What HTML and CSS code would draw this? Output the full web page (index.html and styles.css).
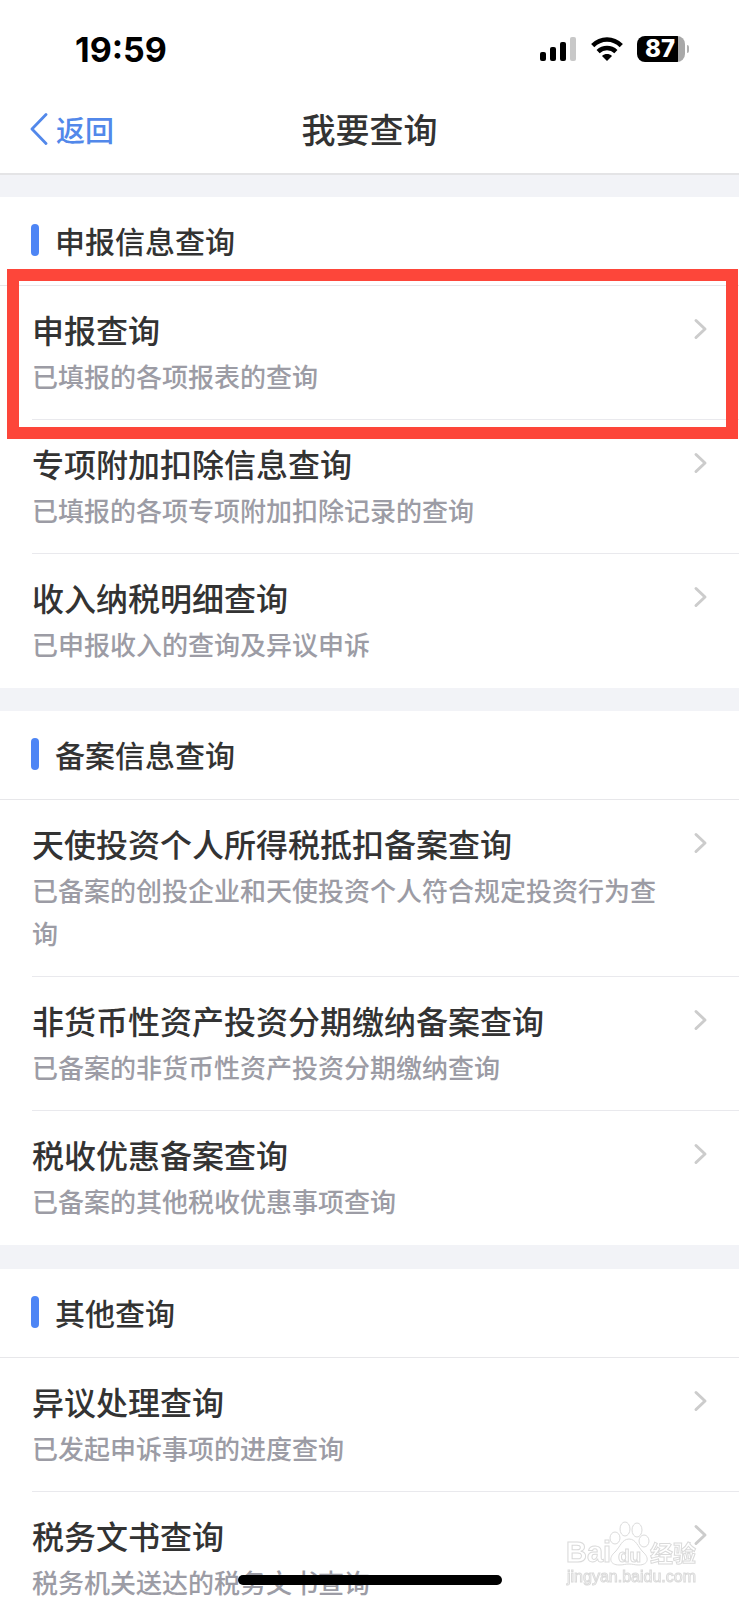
FILE: index.html
```html
<!DOCTYPE html>
<html lang="zh-CN">
<head>
<meta charset="utf-8">
<meta name="viewport" content="width=device-width, initial-scale=1">
<title>我要查询</title>
<link rel="stylesheet" href="styles.css">
</head>
<body>
<svg class="defs" aria-hidden="true">
  <symbol id="chevron" viewBox="0 0 16 24"><path d="M3 3.500L12 12L3 20.500" fill="none" stroke="currentColor" stroke-width="3" stroke-linecap="round" stroke-linejoin="round"/></symbol>
</svg>
<div class="app">
  <div class="status">
    <time class="clock">19:59</time>
    <div class="indicators">
      <svg class="signal" viewBox="0 0 38 24" aria-label="信号">
        <rect x="1" y="15" width="6" height="9" rx="2"/><rect x="11" y="10" width="6" height="14" rx="2"/><rect x="21" y="5" width="6" height="19" rx="2"/><rect x="31" y="0" width="6" height="24" rx="2" fill="#c8c8c8"/>
      </svg>
      <svg class="wifi" viewBox="0 0 32 24" aria-label="Wi-Fi">
        <g fill="none" stroke="#000" stroke-width="4.500"><path d="M1.700 8.600C10 .4 22 .4 30.300 8.600"/><path d="M7.100 14.600C12.200 9.800 19.800 9.800 24.900 14.600"/></g>
        <path d="M11 19C13.800 16.400 18.200 16.400 21 19L16 24Z"/>
      </svg>
      <div class="battery"><span class="level">87</span></div>
    </div>
  </div>
  <header class="navbar">
    <a class="back" href="#"><svg viewBox="0 0 18 32" aria-hidden="true"><path d="M16 1.500L2 16L16 30.500" fill="none" stroke="currentColor" stroke-width="2.800" stroke-linecap="round" stroke-linejoin="round"/></svg>返回</a>
    <h1>我要查询</h1>
  </header>
  <main class="content">
    <section>
      <h2>申报信息查询</h2>
      <ul>
        <li class="marked"><a href="#"><span class="text"><strong>申报查询</strong><span class="note">已填报的各项报表的查询</span></span><svg class="arrow"><use href="#chevron"/></svg></a></li>
        <li><a href="#"><span class="text"><strong>专项附加扣除信息查询</strong><span class="note">已填报的各项专项附加扣除记录的查询</span></span><svg class="arrow"><use href="#chevron"/></svg></a></li>
        <li><a href="#"><span class="text"><strong>收入纳税明细查询</strong><span class="note">已申报收入的查询及异议申诉</span></span><svg class="arrow"><use href="#chevron"/></svg></a></li>
      </ul>
    </section>
    <section>
      <h2>备案信息查询</h2>
      <ul>
        <li><a href="#"><span class="text"><strong>天使投资个人所得税抵扣备案查询</strong><span class="note">已备案的创投企业和天使投资个人符合规定投资行为查询</span></span><svg class="arrow"><use href="#chevron"/></svg></a></li>
        <li><a href="#"><span class="text"><strong>非货币性资产投资分期缴纳备案查询</strong><span class="note">已备案的非货币性资产投资分期缴纳查询</span></span><svg class="arrow"><use href="#chevron"/></svg></a></li>
        <li><a href="#"><span class="text"><strong>税收优惠备案查询</strong><span class="note">已备案的其他税收优惠事项查询</span></span><svg class="arrow"><use href="#chevron"/></svg></a></li>
      </ul>
    </section>
    <section>
      <h2>其他查询</h2>
      <ul>
        <li><a href="#"><span class="text"><strong>异议处理查询</strong><span class="note">已发起申诉事项的进度查询</span></span><svg class="arrow"><use href="#chevron"/></svg></a></li>
        <li><a href="#"><span class="text"><strong>税务文书查询</strong><span class="note">税务机关送达的税务文书查询</span></span><svg class="arrow"><use href="#chevron"/></svg></a></li>
      </ul>
    </section>
  </main>
  <div class="home-bar"></div>
  <svg class="watermark" viewBox="0 0 140 70" aria-label="Baidu 经验">
    <g class="mark">
      <text x="4" y="42" font-size="29">Bai</text>
      <path d="M67 19C74 19 76 27 81 32C88 38 86 45 77 45C72 45 71 44 67 44C63 44 62 45 57 45C48 45 46 38 53 32C58 27 60 19 67 19Z"/>
      <ellipse cx="53" cy="18" rx="5" ry="6"/><ellipse cx="63" cy="9" rx="5" ry="7"/><ellipse cx="75" cy="10" rx="5" ry="7"/><ellipse cx="82" cy="21" rx="5" ry="6"/>
      <text x="56" y="42" font-size="19">du</text>
      <text x="88" y="42" font-size="23">经验</text>
      <text x="5" y="62" font-size="16" class="domain">jingyan.baidu.com</text>
    </g>
  </svg>
</div>
</body>
</html>
```
FILE: styles.css
```css
* { box-sizing: border-box; }

body {
  margin: 0;
  background: #fff;
  color: #333;
  font-family: "Noto Sans CJK SC", sans-serif;
  font-weight: 500;
}

h1, h2, ul { margin: 0; padding: 0; font-weight: 500; }
ul { list-style: none; }
a { color: inherit; text-decoration: none; }

.defs { position: absolute; width: 0; height: 0; }

.app {
  position: relative;
  display: flex;
  flex-direction: column;
  height: 100vh;
  overflow: hidden;
}

.status {
  display: flex;
  flex: none;
  align-items: center;
  justify-content: space-between;
  height: 98px;
  padding: 0 54px 0 75px;
  color: #000;
  font-family: Inter, sans-serif;
}

.clock { font-size: 34px; font-weight: 700; }
.indicators { display: flex; align-items: center; gap: 14px; }
.signal { width: 38px; height: 24px; }
.wifi { width: 32px; height: 24px; }

.battery {
  position: relative;
  width: 48px;
  height: 26px;
  border-radius: 8px;
  background: linear-gradient(to right, #000 41px, #a8a8a8 41px);
}

.battery::after {
  content: "";
  position: absolute;
  top: 9px;
  right: -4px;
  width: 2px;
  height: 8px;
  border-radius: 0 2px 2px 0;
  background: #b0b0b0;
}

.level {
  display: block;
  padding-left: 8px;
  color: #fff;
  font-size: 24px;
  font-weight: 800;
  line-height: 26px;
}

.navbar {
  display: grid;
  flex: none;
  grid-template-columns: 1fr auto 1fr;
  align-items: center;
  height: 77px;
  padding: 0 30px 14px;
  border-bottom: 2px solid #e4e4e6;
}

.navbar h1 { font-size: 34px; line-height: 50px; }

.back {
  display: flex;
  align-items: center;
  gap: 8px;
  color: #5288ea;
  font-size: 29px;
}

.back svg { width: 18px; height: 32px; }

.content {
  flex: 1;
  min-height: 0;
  overflow: auto;
  scrollbar-width: none;
  background: #f2f3f7;
}

section { margin-top: 23px; background: #fff; }
section:first-child { margin-top: 22px; }
section:last-child { margin-top: 24px; }

h2 {
  display: flex;
  align-items: center;
  gap: 16px;
  height: 89px;
  padding: 0 0 3px 31px;
  border-bottom: 1px solid #e7e7ea;
  font-size: 30px;
}

h2::before {
  content: "";
  width: 8px;
  height: 32px;
  border-radius: 4px;
  background: #4d85f5;
}

li { position: relative; padding-left: 32px; }

li a {
  display: flex;
  align-items: flex-start;
  justify-content: space-between;
  padding: 20px 30px 22px 0;
  border-bottom: 1px solid #e9e9ed;
}

li:last-child a { border-color: transparent; }
.text { flex: 1; padding-right: 36px; }

.text strong {
  display: block;
  margin-bottom: 2px;
  font-size: 32px;
  font-weight: 500;
  line-height: 46px;
}

.note { display: block; color: #9c9ca5; font-size: 26px; line-height: 43px; }
.arrow { flex: none; width: 16px; height: 24px; margin-top: 11px; color: #ccc; }

.marked::after {
  content: "";
  position: absolute;
  z-index: 1;
  inset: -17px 1px -19px 7px;
  border: 12px solid #fd463a;
  pointer-events: none;
}

.home-bar {
  position: absolute;
  bottom: 15px;
  left: 50%;
  width: 264px;
  height: 10px;
  margin-left: -132px;
  border-radius: 5px;
  background: #000;
}

.watermark {
  position: absolute;
  right: 37px;
  bottom: 10px;
  width: 140px;
  height: 70px;
  overflow: visible;
}

.mark {
  fill: #fff;
  stroke: #dadada;
  stroke-width: 1;
  font-family: "Liberation Sans", "Noto Sans CJK SC", sans-serif;
  font-weight: 700;
}

.domain { font-weight: 400; }
```
